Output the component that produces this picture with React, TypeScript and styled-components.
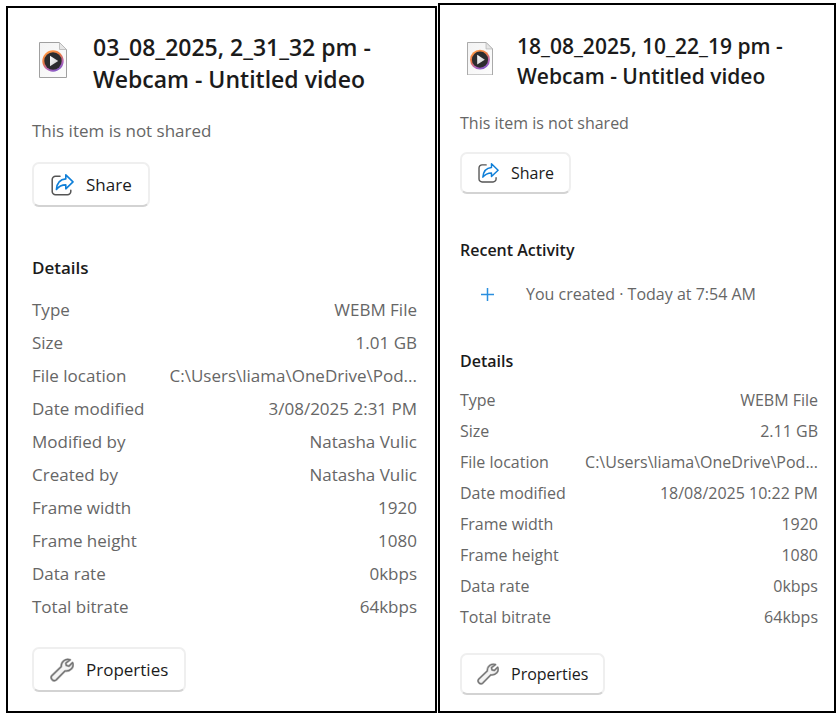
import React from "react";
import styled, { createGlobalStyle, ThemeProvider } from "styled-components";

interface Metrics {
  top: number;
  padTop: number;
  padLeft: number;
  padRight: number;
  padBottom: number;
  iconWidth: number;
  iconInset: number;
  iconGap: number;
  title: number;
  titleLine: number;
  statusGap: number;
  text: number;
  line: number;
  buttonGap: number;
  buttonHeight: number;
  buttonPad: number;
  buttonIcon: number;
  buttonIconGap: number;
  sectionGap: number;
  listGap: number;
  row: number;
  footGap: number;
}

const large: Metrics = {
  top: 3,
  padTop: 23,
  padLeft: 24,
  padRight: 18,
  padBottom: 18,
  iconWidth: 28,
  iconInset: 7,
  iconGap: 26,
  title: 23,
  titleLine: 32,
  statusGap: 24,
  text: 17,
  line: 24,
  buttonGap: 19,
  buttonHeight: 45,
  buttonPad: 16,
  buttonIcon: 24,
  buttonIconGap: 12,
  sectionGap: 49,
  listGap: 13,
  row: 33,
  footGap: 24,
};

const small: Metrics = {
  top: 0,
  padTop: 26,
  padLeft: 20,
  padRight: 16,
  padBottom: 16,
  iconWidth: 26,
  iconInset: 7,
  iconGap: 24,
  title: 21,
  titleLine: 30,
  statusGap: 21,
  text: 16,
  line: 22,
  buttonGap: 18,
  buttonHeight: 42,
  buttonPad: 15,
  buttonIcon: 22,
  buttonIconGap: 12,
  sectionGap: 45,
  listGap: 13,
  row: 31,
  footGap: 20,
};

declare module "styled-components" {
  export interface DefaultTheme extends Metrics {}
}

const GlobalStyle = createGlobalStyle`
  *, *::before, *::after { box-sizing: border-box; }
  body {
    margin: 0;
    background: #fff;
    color: #1b1b1b;
    font-family: "Segoe UI", "Open Sans", "Noto Sans", sans-serif;
  }
  h2, h3, p, dl, dt, dd { margin: 0; }
`;

const Page = styled.main`
  display: grid;
  grid-template-columns: 431fr 398fr;
  gap: 1px;
  padding: 3px 4px 8px 6px;
`;

const Panel = styled.section`
  display: flex;
  flex-direction: column;
  align-items: stretch;
  min-width: 0;
  margin-top: ${({ theme }) => theme.top}px;
  padding: ${({ theme }) =>
    `${theme.padTop}px ${theme.padRight}px ${theme.padBottom}px ${theme.padLeft}px`};
  border: 2px solid #000;
  background: #fff;
  font-size: ${({ theme }) => theme.text}px;
  line-height: ${({ theme }) => theme.line}px;
`;

const Header = styled.header`
  display: flex;
  align-items: flex-start;
  gap: ${({ theme }) => theme.iconGap}px;
  padding-left: ${({ theme }) => theme.iconInset}px;
`;

const FileGlyph = styled.svg`
  flex: none;
  width: ${({ theme }) => theme.iconWidth}px;
  margin-top: 11px;
`;

const Title = styled.h2`
  font-size: ${({ theme }) => theme.title}px;
  line-height: ${({ theme }) => theme.titleLine}px;
  font-weight: 600;
`;

const Muted = styled.p`
  color: #666;
`;

const Status = styled(Muted)`
  margin-top: ${({ theme }) => theme.statusGap}px;
`;

const ActionButton = styled.button<{ $gap: number }>`
  display: flex;
  align-items: center;
  align-self: flex-start;
  gap: ${({ theme }) => theme.buttonIconGap}px;
  height: ${({ theme }) => theme.buttonHeight}px;
  margin: ${({ $gap }) => $gap}px 0 0;
  padding: 0 ${({ theme }) => theme.buttonPad}px;
  border: 2px solid #efefef;
  border-bottom-color: #d3d3d3;
  border-radius: 7px;
  background: #fff;
  color: #1b1b1b;
  font: inherit;
  cursor: pointer;
`;

const ButtonGlyph = styled.svg`
  flex: none;
  width: ${({ theme }) => theme.buttonIcon}px;
  height: ${({ theme }) => theme.buttonIcon}px;
`;

const SectionTitle = styled.h3`
  margin-top: ${({ theme }) => theme.sectionGap}px;
  font-size: inherit;
  font-weight: 600;
`;

const Activity = styled.div`
  display: flex;
  align-items: center;
  gap: 30px;
  margin-top: 22px;
  padding-left: 19px;
`;

const PlusGlyph = styled.svg`
  flex: none;
  width: 17px;
  height: 17px;
`;

const DetailList = styled.dl`
  margin-top: ${({ theme }) => theme.listGap}px;
  color: #666;
`;

const DetailRow = styled.div`
  display: flex;
  justify-content: space-between;
  gap: 16px;
  line-height: ${({ theme }) => theme.row}px;
  white-space: nowrap;
`;

const DetailValue = styled.dd`
  min-width: 0;
  overflow: hidden;
  text-overflow: ellipsis;
`;

function VideoFileIcon({ id }: { id: string }) {
  return (
    <FileGlyph viewBox="0 0 28 36" aria-hidden="true">
      <defs>
        <linearGradient id={`${id}-page`} x1="0" y1="0" x2="1" y2="1">
          <stop offset="0" stopColor="#f3f3f3" />
          <stop offset="1" stopColor="#fcfcfc" />
        </linearGradient>
        <linearGradient id={`${id}-ring`} x1="0.25" y1="0" x2="0.75" y2="1">
          <stop offset="0" stopColor="#ff9a45" />
          <stop offset="0.4" stopColor="#e87845" />
          <stop offset="0.7" stopColor="#b765b8" />
          <stop offset="1" stopColor="#7557c8" />
        </linearGradient>
        <linearGradient id={`${id}-play`} x1="0" y1="0" x2="1" y2="1">
          <stop offset="0" stopColor="#fff" />
          <stop offset="1" stopColor="#c9c9c9" />
        </linearGradient>
      </defs>
      <path
        d="M.5.5h20l7 7v28H.5z"
        fill={`url(#${id}-page)`}
        stroke="#a0a0a0"
      />
      <path d="M20.500.5v7h7z" fill="#e6e6e6" stroke="#b5b5b5" strokeWidth=".8" />
      <circle cx="14" cy="19" r="10.700" fill={`url(#${id}-ring)`} />
      <circle cx="14" cy="19" r="8.700" fill="#2c2c2e" />
      <path d="M11 13.800v10.400l8.200-5.200z" fill={`url(#${id}-play)`} />
    </FileGlyph>
  );
}

function ShareIcon() {
  return (
    <ButtonGlyph viewBox="0 0 24 24" fill="none" aria-hidden="true">
      <path
        d="M10 3.200H5.500A3.300 3.300 0 0 0 2.200 6.500v12a3.300 3.300 0 0 0 3.300 3.300h12a3.300 3.300 0 0 0 3.300-3.300v-1.300"
        stroke="#555"
        strokeWidth="1.500"
        strokeLinecap="round"
      />
      <path
        d="M15.800 1.900 23 8.900l-7.200 6.900v-3.900c-4 0-7 1.400-9.400 4.600.5-6 3.800-10.200 9.400-10.600z"
        stroke="#0f7fd8"
        strokeWidth="1.600"
        strokeLinejoin="round"
      />
    </ButtonGlyph>
  );
}

function WrenchIcon() {
  const shape =
    "M20.500 1.300C16 -.3 11 3 11.200 8.500L1.500 17.800C-.8 20.500 3 24.800 6 22.300L15.200 13C20.800 13.600 25 9 23 4.300L19.300 8L16.500 7.300L16 4.800Z";
  return (
    <ButtonGlyph viewBox="-.5 -.5 25 25" fill="none" aria-hidden="true">
      <path d={shape} fill="#f4f4f4" stroke="#b4b4b4" strokeWidth="2.400" strokeLinejoin="round" />
      <path d={shape} stroke="#707070" strokeWidth="1.200" strokeLinejoin="round" />
    </ButtonGlyph>
  );
}

function PlusIcon() {
  return (
    <PlusGlyph viewBox="0 0 17 17" aria-hidden="true">
      <path d="M8.500 2v13M2 8.500h13" stroke="#2b8fdf" strokeWidth="1.500" />
    </PlusGlyph>
  );
}

interface FilePanelProps {
  id: string;
  metrics: Metrics;
  name: string;
  activity?: string;
  details: [string, string][];
}

function FilePanel({ id, metrics, name, activity, details }: FilePanelProps) {
  return (
    <ThemeProvider theme={metrics}>
      <Panel aria-labelledby={`${id}-title`}>
        <Header>
          <VideoFileIcon id={id} />
          <Title id={`${id}-title`}>{name}</Title>
        </Header>
        <Status>This item is not shared</Status>
        <ActionButton type="button" $gap={metrics.buttonGap}>
          <ShareIcon />
          Share
        </ActionButton>
        {activity && (
          <>
            <SectionTitle>Recent Activity</SectionTitle>
            <Activity>
              <PlusIcon />
              <Muted>{activity}</Muted>
            </Activity>
          </>
        )}
        <SectionTitle>Details</SectionTitle>
        <DetailList>
          {details.map(([label, value]) => (
            <DetailRow key={label}>
              <dt>{label}</dt>
              <DetailValue>{value}</DetailValue>
            </DetailRow>
          ))}
        </DetailList>
        <ActionButton type="button" $gap={metrics.footGap}>
          <WrenchIcon />
          Properties
        </ActionButton>
      </Panel>
    </ThemeProvider>
  );
}

const firstDetails: [string, string][] = [
  ["Type", "WEBM File"],
  ["Size", "1.01 GB"],
  ["File location", "C:\\Users\\liama\\OneDrive\\Pod..."],
  ["Date modified", "3/08/2025 2:31 PM"],
  ["Modified by", "Natasha Vulic"],
  ["Created by", "Natasha Vulic"],
  ["Frame width", "1920"],
  ["Frame height", "1080"],
  ["Data rate", "0kbps"],
  ["Total bitrate", "64kbps"],
];

const secondDetails: [string, string][] = [
  ["Type", "WEBM File"],
  ["Size", "2.11 GB"],
  ["File location", "C:\\Users\\liama\\OneDrive\\Pod..."],
  ["Date modified", "18/08/2025 10:22 PM"],
  ["Frame width", "1920"],
  ["Frame height", "1080"],
  ["Data rate", "0kbps"],
  ["Total bitrate", "64kbps"],
];

export default function App() {
  return (
    <>
      <GlobalStyle />
      <Page>
        <FilePanel
          id="first"
          metrics={large}
          name="03_08_2025, 2_31_32 pm - Webcam - Untitled video"
          details={firstDetails}
        />
        <FilePanel
          id="second"
          metrics={small}
          name="18_08_2025, 10_22_19 pm - Webcam - Untitled video"
          activity="You created · Today at 7:54 AM"
          details={secondDetails}
        />
      </Page>
    </>
  );
}
